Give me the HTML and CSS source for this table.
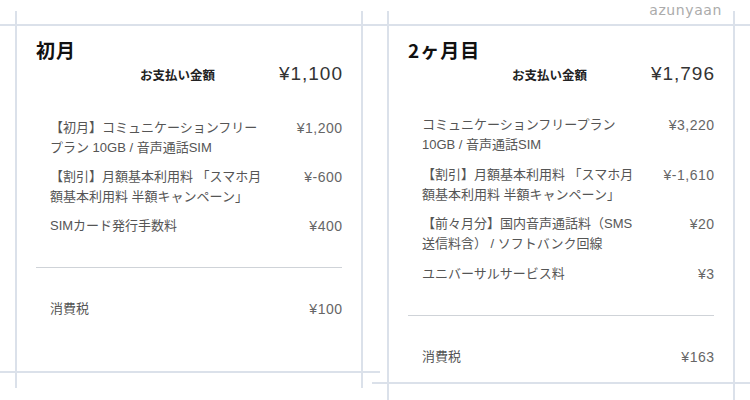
FILE: index.html
```html
<!DOCTYPE html>
<html lang="ja">
<head>
<meta charset="utf-8">
<link rel="stylesheet" href="styles.css">
</head>
<body>
<div class="page">
  <section class="shot shot-left">
    <h2 class="month">初月</h2>
    <div class="total"><span class="total-label">お支払い金額</span><span class="total-amount">¥1,100</span></div>
    <div class="items">
      <div class="item"><span class="desc">【初月】コミュニケーションフリー<br>プラン 10GB / 音声通話SIM</span><span class="amt">¥1,200</span></div>
      <div class="item"><span class="desc">【割引】月額基本利用料 「スマホ月<br>額基本利用料 半額キャンペーン」</span><span class="amt">¥-600</span></div>
      <div class="item"><span class="desc">SIMカード発行手数料</span><span class="amt">¥400</span></div>
    </div>
    <hr class="divider">
    <div class="item tax"><span class="desc">消費税</span><span class="amt">¥100</span></div>
  </section>
  <section class="shot shot-right">
    <div class="watermark">azunyaan</div>
    <h2 class="month">2ヶ月目</h2>
    <div class="total"><span class="total-label">お支払い金額</span><span class="total-amount">¥1,796</span></div>
    <div class="items">
      <div class="item"><span class="desc">コミュニケーションフリープラン<br>10GB / 音声通話SIM</span><span class="amt">¥3,220</span></div>
      <div class="item"><span class="desc">【割引】月額基本利用料 「スマホ月<br>額基本利用料 半額キャンペーン」</span><span class="amt">¥-1,610</span></div>
      <div class="item"><span class="desc">【前々月分】国内音声通話料（SMS<br>送信料含） / ソフトバンク回線</span><span class="amt">¥20</span></div>
      <div class="item"><span class="desc">ユニバーサルサービス料</span><span class="amt">¥3</span></div>
    </div>
    <hr class="divider">
    <div class="item tax"><span class="desc">消費税</span><span class="amt">¥163</span></div>
  </section>
</div>
</body>
</html>
```
FILE: styles.css
```css
* { box-sizing: border-box; }
html, body { margin: 0; padding: 0; background: #fff; }
body {
  width: 750px;
  height: 400px;
  overflow: hidden;
  font-family: "Liberation Sans", "Noto Sans CJK JP", sans-serif;
  color: #555;
}
.page {
  position: relative;
  display: flex;
  gap: 24px;
  padding: 11px 0 0 15px;
  height: 400px;
}
.page::before {
  content: "";
  position: absolute;
  top: 24px;
  left: 0;
  right: 0;
  height: 2px;
  background: #dbe1ea;
}
.shot {
  position: relative;
  width: 348px;
  border-left: 2px solid #dbe1ea;
  border-right: 2px solid #dbe1ea;
  padding: 26px 19px 0 19px;
}
.shot-left { height: 377px; }
.shot-right { height: 395px; }
.shot::after {
  content: "";
  position: absolute;
  height: 2px;
  background: #dbe1ea;
  left: -17px;
}
.shot-left::after { top: 360px; width: 380px; }
.shot-right::after { top: 371px; width: 381px; }
.watermark {
  position: absolute;
  top: -9px;
  right: 11px;
  font-family: "DejaVu Sans", sans-serif;
  font-size: 14px;
  letter-spacing: 0.6px;
  color: #ababab;
}
.month {
  margin: 0;
  font-family: "Noto Sans CJK JP", sans-serif;
  font-size: 19px;
  line-height: 26px;
  font-weight: 700;
  color: #111;
  letter-spacing: 1px;
}
.total {
  display: flex;
  justify-content: space-between;
  align-items: center;
  padding-left: 104px;
  height: 22px;
}
.total-label {
  font-family: "Noto Sans CJK JP", sans-serif;
  font-size: 12.5px;
  font-weight: 700;
  color: #222;
}
.total-amount {
  font-size: 19px;
  color: #333;
  letter-spacing: 1px;
  margin-right: -1px;
}
.items {
  display: flex;
  flex-direction: column;
  gap: 9px;
  margin-top: 33px;
  padding-left: 14px;
}
.shot-right .items { margin-top: 30px; gap: 9.5px; }
.item {
  display: flex;
  justify-content: space-between;
  font-size: 13px;
  line-height: 20px;
}
.desc { color: #555; }
.amt {
  color: #666;
  white-space: nowrap;
  font-size: 14px;
  letter-spacing: 0.5px;
  margin-right: -0.5px;
}
.divider {
  margin: 31px 0 0 0;
  border: 0;
  height: 1px;
  background: #cfd3d8;
}
.tax {
  margin-top: 31px;
  padding-left: 14px;
}
```
